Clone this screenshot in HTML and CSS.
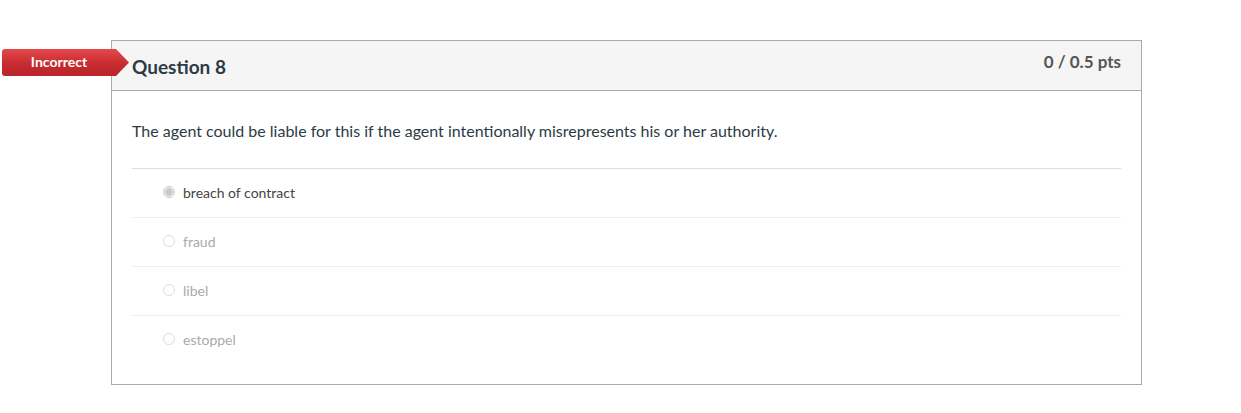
FILE: index.html
```html
<!DOCTYPE html>
<html>
<head>
<meta charset="utf-8">
<link rel="stylesheet" href="styles.css">
</head>
<body>
<div class="page">
  <div class="card">
    <div class="badge">Incorrect</div>
    <div class="header">
      <span class="qname">Question 8</span>
      <span class="pts">0 / 0.5 pts</span>
    </div>
    <div class="body">
      <div class="qtext">The agent could be liable for this if the agent intentionally misrepresents his or her authority.</div>
      <div class="answers">
        <div class="answer selected"><span class="radio"></span><span class="label">breach of contract</span></div>
        <div class="answer"><span class="radio"></span><span class="label">fraud</span></div>
        <div class="answer"><span class="radio"></span><span class="label">libel</span></div>
        <div class="answer"><span class="radio"></span><span class="label">estoppel</span></div>
      </div>
    </div>
  </div>
</div>
</body>
</html>
```
FILE: styles.css
```css
* { box-sizing: border-box; }
html, body { margin: 0; padding: 0; background: #fff; }
body { font-family: Lato, "Open Sans", sans-serif; color: #2d3b45; }
.page { padding: 40px 0 0 111px; }
.card {
  position: relative;
  width: 1031px;
  border: 1px solid #aaaaaa;
  background: #fff;
}
.badge {
  position: absolute;
  left: -110px;
  top: 8px;
  width: 127px;
  height: 27px;
  padding-right: 13px;
  padding-bottom: 2px;
  display: flex;
  align-items: center;
  justify-content: center;
  color: #fff;
  font-weight: 700;
  font-size: 14px;
  background: linear-gradient(#e5484a, #c42a2e 60%, #b8252a);
  border-radius: 3px 0 0 3px;
  clip-path: polygon(0 0, 114px 0, 127px 50%, 114px 100%, 0 100%);
}
.header {
  height: 50px;
  background: #f5f5f5;
  border-bottom: 1px solid #aaaaaa;
  display: flex;
  justify-content: space-between;
  align-items: flex-start;
  padding: 0 20px;
}
.qname {
  font-size: 19px;
  font-weight: 700;
  color: #2d3b45;
  margin-top: 14px;
}
.pts {
  font-size: 17px;
  font-weight: 700;
  color: #555;
  margin-top: 10px;
}
.body { padding: 30px 20px 20px; }
.qtext {
  font-size: 16px;
  line-height: 20px;
  color: #2d3b45;
  padding-bottom: 27px;
  border-bottom: 1px solid #dddddd;
}
.answer {
  height: 49px;
  display: flex;
  align-items: center;
  padding-left: 31px;
  padding-bottom: 2px;
  font-size: 14px;
  color: #aaaaaa;
  border-bottom: 1px solid #eeeeee;
}
.answer:last-child { border-bottom: none; height: 48px; }
.radio {
  width: 12px;
  height: 12px;
  border-radius: 50%;
  border: 1px solid #dddddd;
  background: #fff;
  margin-right: 8px;
  flex: none;
}
.answer.selected { color: #444; }
.answer.selected .radio {
  border-color: #cccccc;
  background: radial-gradient(circle, #c8c8c8 0 3.5px, #f0f0f0 4px);
}
```
